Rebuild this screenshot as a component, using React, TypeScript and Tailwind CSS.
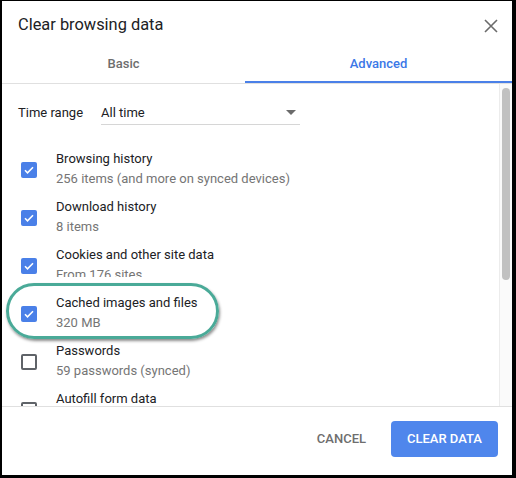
import React from "react";

const Check = ({ checked }: { checked: boolean }) =>
  checked ? (
    <div className="w-[16px] h-[16px] rounded-[2px] bg-[#4a80e8] flex items-center justify-center">
      <svg width="12" height="12" viewBox="0 0 24 24">
        <path d="M4 12.5l5 5L20 6.5" fill="none" stroke="white" strokeWidth="3.2" />
      </svg>
    </div>
  ) : (
    <div className="w-[16px] h-[16px] rounded-[2px] border-2 border-[#5f6368]" />
  );

const items = [
  { t: "Browsing history", s: "256 items (and more on synced devices)", c: true },
  { t: "Download history", s: "8 items", c: true },
  { t: "Cookies and other site data", s: "From 176 sites", c: true },
  { t: "Cached images and files", s: "320 MB", c: true },
  { t: "Passwords", s: "59 passwords (synced)", c: false },
  { t: "Autofill form data", s: "\u00a0", c: false },
];

export default function App() {
  return (
    <div className="w-[516px] h-[478px] bg-black pl-[2px] pt-[1px] pr-[4px] pb-[3px] font-['Roboto',sans-serif]">
      <div className="w-full h-full bg-white flex flex-col relative">
        <div className="h-[48px] flex items-center justify-between pl-[16px] pr-[14px] pt-[1px]">
          <span className="text-[16.4px] text-[#202124]">Clear browsing data</span>
          <svg width="14" height="14" viewBox="0 0 14 14">
            <path d="M1 1L13 13M13 1L1 13" stroke="#6b6b6b" strokeWidth="1.6" />
          </svg>
        </div>
        <div className="flex h-[35px] border-b border-[#e0e0e0]">
          <div className="w-[243px] flex items-center justify-center text-[13px] font-medium text-[#6e6e6e] pb-[4px]">Basic</div>
          <div className="flex-1 flex items-center justify-center text-[13px] font-medium text-[#3b78e7] border-b-2 border-[#4a80e8] pb-[2px]">Advanced</div>
        </div>
        <div className="flex-1 flex overflow-hidden relative">
          <div className="flex-1 overflow-hidden">
            <div className="flex items-center pl-[16px] pt-[17px]">
              <span className="text-[13px] text-[#202124] w-[83px]">Time range</span>
              <div className="w-[199px] h-[24px] border-b border-[#d6d6d6] flex items-center justify-between pr-[4px]">
                <span className="text-[13px] text-[#202124]">All time</span>
                <svg width="10" height="5" viewBox="0 0 10 5"><path d="M0 0h10L5 5z" fill="#6b6b6b" /></svg>
              </div>
            </div>
            <div className="pt-[20px]">
              {items.map((it) => (
                <div key={it.t} className="flex items-center h-[48px] pl-[19px]">
                  <div className="pt-[2px]"><Check checked={it.c} /></div>
                  <div className="ml-[19px] flex flex-col leading-[20px]">
                    <span className="text-[13px] text-[#202124]">{it.t}</span>
                    <span className="text-[13px] text-[#757575]">{it.s}</span>
                  </div>
                </div>
              ))}
            </div>
          </div>
          <div className="w-[13px] border-l border-[#ececec] bg-[#fafafa] pt-[4px] flex justify-center">
            <div className="w-[8px] h-[192px] rounded-full bg-[#c1c1c1]" />
          </div>
        </div>
        <div className="h-[69px] border-t border-[#e0e0e0] flex items-center justify-end pr-[14px] gap-[25px] pb-[4px]">
          <span className="text-[13px] font-medium text-[#6e6e6e]">CANCEL</span>
          <div className="w-[107px] h-[36px] rounded-[4px] bg-[#4f86ec] flex items-center justify-center text-[13px] font-medium text-white">CLEAR DATA</div>
        </div>
        <div className="absolute left-[26px] top-[276px] w-[170px] h-[10px] bg-white" />
        <div className="absolute left-[4px] top-[282px] w-[213px] h-[56px] rounded-full border-[3px] border-[#4aaa98] shadow-[1px_2px_3px_rgba(0,0,0,0.45)]" />
      </div>
    </div>
  );
}
